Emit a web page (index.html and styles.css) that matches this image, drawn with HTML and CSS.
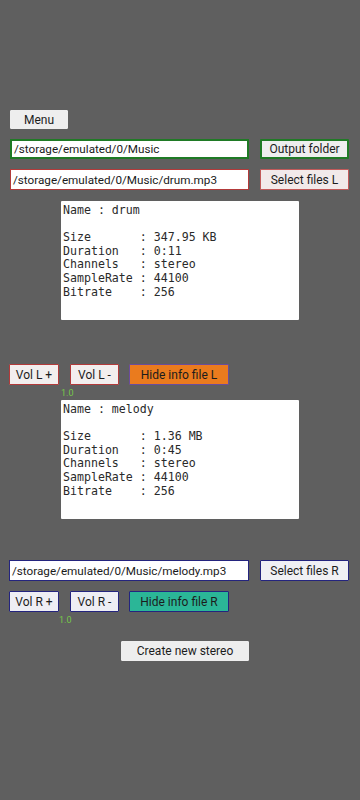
FILE: index.html
```html
<!DOCTYPE html>
<html lang="en">
<head>
  <meta charset="UTF-8">
  <meta name="viewport" content="width=device-width, initial-scale=1.0">
  <title>Stereo Mixer</title>
  <link rel="stylesheet" href="styles.css">
</head>
<body>
  <div class="app">
    <button class="btn menu">Menu</button>

    <div class="row row-out">
      <div class="path path-out">/storage/emulated/0/Music</div>
      <button class="btn btn-out">Output folder</button>
    </div>

    <div class="row row-left">
      <div class="path path-left">/storage/emulated/0/Music/drum.mp3</div>
      <button class="btn btn-left">Select files L</button>
    </div>

    <pre class="info info-left">Name : drum

Size       : 347.95 KB
Duration   : 0:11
Channels   : stereo
SampleRate : 44100
Bitrate    : 256</pre>

    <div class="row vol-row vol-left">
      <button class="btn vol vol-plus">Vol L +</button>
      <button class="btn vol vol-minus">Vol L -</button>
      <button class="btn hide hide-left">Hide info file L</button>
    </div>
    <div class="level level-left">1.0</div>

    <pre class="info info-right">Name : melody

Size       : 1.36 MB
Duration   : 0:45
Channels   : stereo
SampleRate : 44100
Bitrate    : 256</pre>

    <div class="row row-right">
      <div class="path path-right">/storage/emulated/0/Music/melody.mp3</div>
      <button class="btn btn-right">Select files R</button>
    </div>

    <div class="row vol-row vol-right">
      <button class="btn vol vol-plus">Vol R +</button>
      <button class="btn vol vol-minus">Vol R -</button>
      <button class="btn hide hide-right">Hide info file R</button>
    </div>
    <div class="level level-right">1.0</div>

    <button class="btn create">Create new stereo</button>
  </div>
</body>
</html>
```

FILE: styles.css
```css
* {
  margin: 0;
  padding: 0;
  box-sizing: border-box;
}

body {
  background-color: #5f5f5f;
  font-family: Roboto, "Liberation Sans", sans-serif;
  height: 800px;
}

.app {
  padding-top: 110px;
}

.btn {
  display: flex;
  justify-content: center;
  align-items: center;
  background: #eeeeee;
  border: 1px solid #eeeeee;
  border-radius: 1px;
  font-family: Roboto, "Liberation Sans", sans-serif;
  font-size: 12px;
  color: #1c1c1c;
}

.menu {
  margin-left: 10px;
  width: 58px;
  height: 19px;
}

.row {
  display: flex;
  align-items: center;
}

.path {
  background: #ffffff;
  font-size: 11.7px;
  color: #1a1a1a;
  display: flex;
  align-items: center;
  padding-left: 2px;
  white-space: nowrap;
  overflow: hidden;
}

.row-out {
  margin-top: 10px;
  height: 20px;
}

.path-out {
  margin-left: 10px;
  width: 239px;
  height: 20px;
  border: 2px solid #1f7a25;
}

.btn-out {
  margin-left: 11px;
  width: 89px;
  height: 20px;
  border: 2px solid #1f7a25;
}

.row-left {
  margin-top: 10px;
  height: 21px;
}

.path-left {
  margin-left: 10px;
  width: 239px;
  height: 21px;
  border: 1px solid #b23a3a;
}

.btn-left {
  margin-left: 11px;
  width: 89px;
  height: 21px;
  background: #f2eaea;
  border: 1px solid #c25a5a;
}

.info {
  background: #ffffff;
  margin-left: 61px;
  width: 238px;
  height: 119px;
  padding: 3px 2px;
  font-family: "DejaVu Sans Mono", monospace;
  font-size: 11.6px;
  line-height: 13.6px;
  color: #2a2a2a;
  border-radius: 1px;
}

.info-left {
  margin-top: 11px;
}

.vol-row {
  height: 21px;
}

.vol-left {
  margin-top: 44px;
}

.vol {
  width: 50px;
  height: 21px;
}

.vol-plus {
  margin-left: 9px;
}

.vol-minus {
  margin-left: 11px;
  width: 49px;
}

.hide {
  margin-left: 10px;
  width: 100px;
  height: 21px;
}

.vol-left .vol {
  background: #f2eeee;
  border: 1px solid #b23a3a;
}

.hide-left {
  background: #ea7b1e;
  border: 1px solid #6a4c9c;
}

.vol-right .vol {
  background: #eeeef4;
  border: 1px solid #24247e;
}

.hide-right {
  background: #2bb697;
  border: 1px solid #24247e;
}

.level {
  font-size: 9px;
  line-height: 10px;
  color: #76c84a;
}

.level-left {
  margin-left: 61px;
  margin-top: 3px;
  height: 11px;
}

.info-right {
  margin-top: 1px;
}

.row-right {
  margin-top: 41px;
  height: 21px;
}

.path-right {
  margin-left: 9px;
  width: 240px;
  height: 21px;
  border: 1px solid #24247e;
}

.btn-right {
  margin-left: 11px;
  width: 89px;
  height: 21px;
  background: #f0f0f4;
  border: 1px solid #24247e;
}

.vol-right {
  margin-top: 10px;
}

.level-right {
  margin-left: 59px;
  margin-top: 3px;
  height: 11px;
}

.create {
  margin-left: 121px;
  margin-top: 15px;
  width: 128px;
  height: 20px;
}
```
